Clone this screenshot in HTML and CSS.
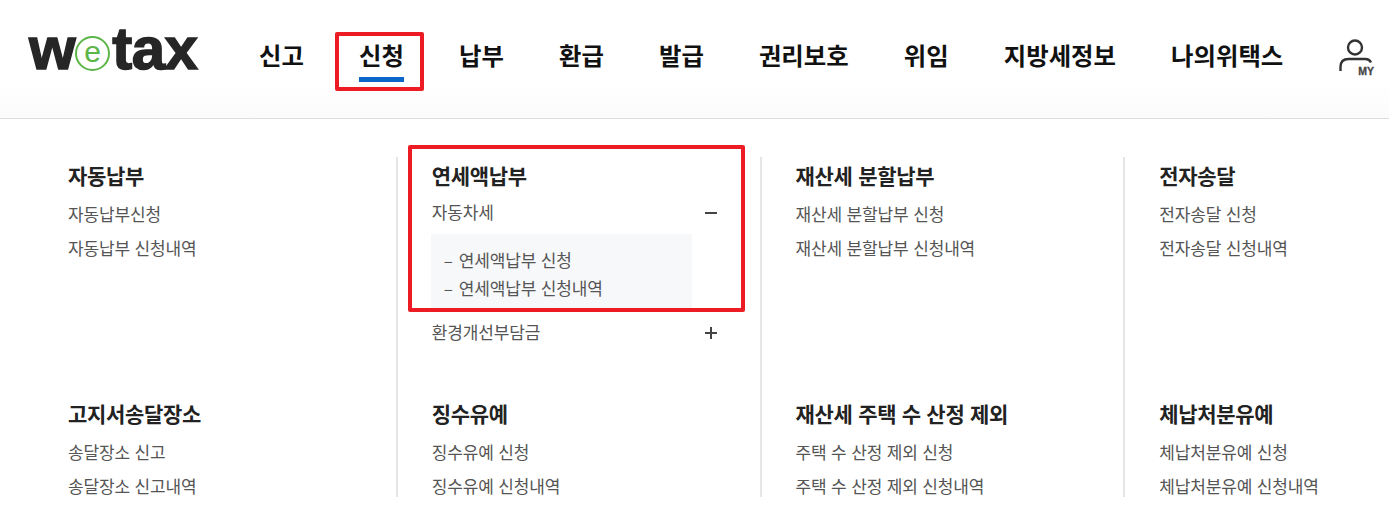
FILE: index.html
```html
<!DOCTYPE html>
<html lang="ko">
<head>
  <meta charset="UTF-8">
  <title>위택스 신청</title>
  <link rel="stylesheet" href="styles.css">
</head>
<body>

<header class="header">
  <div class="logo">w<span class="logo-e">e</span>tax</div>
  <nav class="nav">
    <a>신고</a>
    <a class="active">신청</a>
    <a>납부</a>
    <a>환급</a>
    <a>발급</a>
    <a>권리보호</a>
    <a>위임</a>
    <a>지방세정보</a>
    <a>나의위택스</a>
  </nav>
  <div class="my">
    <svg width="36" height="38" viewBox="0 0 36 38" fill="none" stroke="#333" stroke-width="2.4">
      <circle cx="16" cy="9.5" r="7"/>
      <path d="M1.500 33v-4c0-5 3-8 8-8h17c2.500 0 4.500 1.500 5.500 3.500"/>
    </svg>
    <span class="my-label">MY</span>
  </div>
</header>

<div class="menu">
  <div class="menu-col">
    <h3>자동납부</h3>
    <a>자동납부신청</a>
    <a>자동납부 신청내역</a>
  </div>
  <div class="menu-col">
    <h3>연세액납부</h3>
    <div class="acc-head">자동차세 <span class="acc-icon minus"></span></div>
    <ul class="acc-panel">
      <li>연세액납부 신청</li>
      <li>연세액납부 신청내역</li>
    </ul>
    <div class="acc-head">환경개선부담금 <span class="acc-icon plus"></span></div>
  </div>
  <div class="menu-col">
    <h3>재산세 분할납부</h3>
    <a>재산세 분할납부 신청</a>
    <a>재산세 분할납부 신청내역</a>
  </div>
  <div class="menu-col">
    <h3>전자송달</h3>
    <a>전자송달 신청</a>
    <a>전자송달 신청내역</a>
  </div>
  <div class="menu-col">
    <h3>고지서송달장소</h3>
    <a>송달장소 신고</a>
    <a>송달장소 신고내역</a>
  </div>
  <div class="menu-col">
    <h3>징수유예</h3>
    <a>징수유예 신청</a>
    <a>징수유예 신청내역</a>
  </div>
  <div class="menu-col">
    <h3>재산세 주택 수 산정 제외</h3>
    <a>주택 수 산정 제외 신청</a>
    <a>주택 수 산정 제외 신청내역</a>
  </div>
  <div class="menu-col">
    <h3>체납처분유예</h3>
    <a>체납처분유예 신청</a>
    <a>체납처분유예 신청내역</a>
  </div>
</div>

<div class="mark mark-nav"></div>
<div class="mark mark-col"></div>

</body>
</html>
```

FILE: styles.css
```css
body {
  margin: 0;
  height: 516px;
  overflow: hidden;
  background: #fff;
  font-family: "Noto Sans CJK KR", "Noto Sans", sans-serif;
}
.header {
  display: flex;
  align-items: flex-start;
  height: 118px;
  padding-left: 28px;
  border-bottom: 1px solid #ddd;
  background: linear-gradient(#fff 80px, #fbfbfb);
}
.logo {
  width: 230px;
  margin: 14px 0 0 1px;
  font-family: "Liberation Sans", sans-serif;
  font-size: 60px;
  line-height: 70px;
  font-weight: 700;
  letter-spacing: -0.5px;
  white-space: nowrap;
  color: #262626;
  -webkit-text-stroke: 1.5px #262626;
}
.logo-e {
  display: inline-block;
  width: 35px;
  height: 35px;
  margin: 0 2px 0 0;
  border: 2px solid #5cb547;
  border-radius: 50%;
  box-sizing: border-box;
  color: #5cb547;
  font-size: 30px;
  line-height: 28px;
  font-weight: 400;
  letter-spacing: 0;
  text-align: center;
  vertical-align: 7px;
  -webkit-text-stroke: 0;
}
.nav {
  display: flex;
  gap: 55.1px;
  margin-top: 35px;
}
.nav a {
  position: relative;
  font-size: 24.4px;
  line-height: 40px;
  font-weight: 700;
  color: #111;
}
.nav a.active::after {
  content: "";
  position: absolute;
  left: 0;
  right: 0;
  top: 42px;
  height: 5px;
  background: #0a66c8;
}
.my {
  position: relative;
  margin: 38px 0 0 56px;
}
.my-label {
  position: absolute;
  left: 18px;
  top: 28px;
  padding-left: 1px;
  font-family: "Liberation Sans", sans-serif;
  font-size: 10.500px;
  line-height: 10px;
  font-weight: 700;
  color: #444;
  background: #fff;
  -webkit-text-stroke: 0.3px #444;
}
.menu {
  display: grid;
  grid-template-columns: repeat(4, 363.75px);
  grid-auto-rows: 237.5px;
  height: 340px;
  margin: 38px 0 0 34px;
  overflow: hidden;
}
.menu-col {
  padding-left: 34px;
  border-right: 2px solid #e5e5e5;
}
.menu-col:nth-child(4n) {
  border-right: none;
}
.menu-col h3 {
  margin: 0 0 4px;
  font-size: 21px;
  line-height: 36px;
  font-weight: 700;
  letter-spacing: -0.3px;
  color: #222;
}
.menu-col a {
  display: block;
  font-size: 17px;
  line-height: 34px;
  letter-spacing: -0.15px;
  color: #555;
}
.acc-head {
  display: flex;
  justify-content: space-between;
  align-items: center;
  width: 285px;
  font-size: 17px;
  line-height: 34px;
  letter-spacing: -0.15px;
  color: #555;
}
.menu-col h3 + .acc-head {
  margin-top: -2px;
}
.acc-icon {
  position: relative;
  width: 12px;
  height: 2px;
  margin-top: 2px;
  background: #444;
}
.plus::after {
  content: "";
  position: absolute;
  left: 5px;
  top: -5px;
  width: 2px;
  height: 12px;
  background: #444;
}
.acc-panel {
  width: 261px;
  height: 77px;
  margin: 5px 0 4px -1px;
  padding: 12px 0 0 13px;
  box-sizing: border-box;
  background: #f7f8fa;
  list-style: none;
  font-size: 17px;
  line-height: 28px;
  letter-spacing: -0.15px;
  color: #555;
}
.acc-panel li::before {
  content: "–";
  display: inline-block;
  width: 15px;
}
.mark {
  position: absolute;
  border: 4px solid #ed1c24;
  border-radius: 2px;
  box-sizing: border-box;
}
.mark-nav {
  left: 335px;
  top: 32px;
  width: 89px;
  height: 59px;
}
.mark-col {
  left: 408px;
  top: 145px;
  width: 337px;
  height: 167px;
}
```
